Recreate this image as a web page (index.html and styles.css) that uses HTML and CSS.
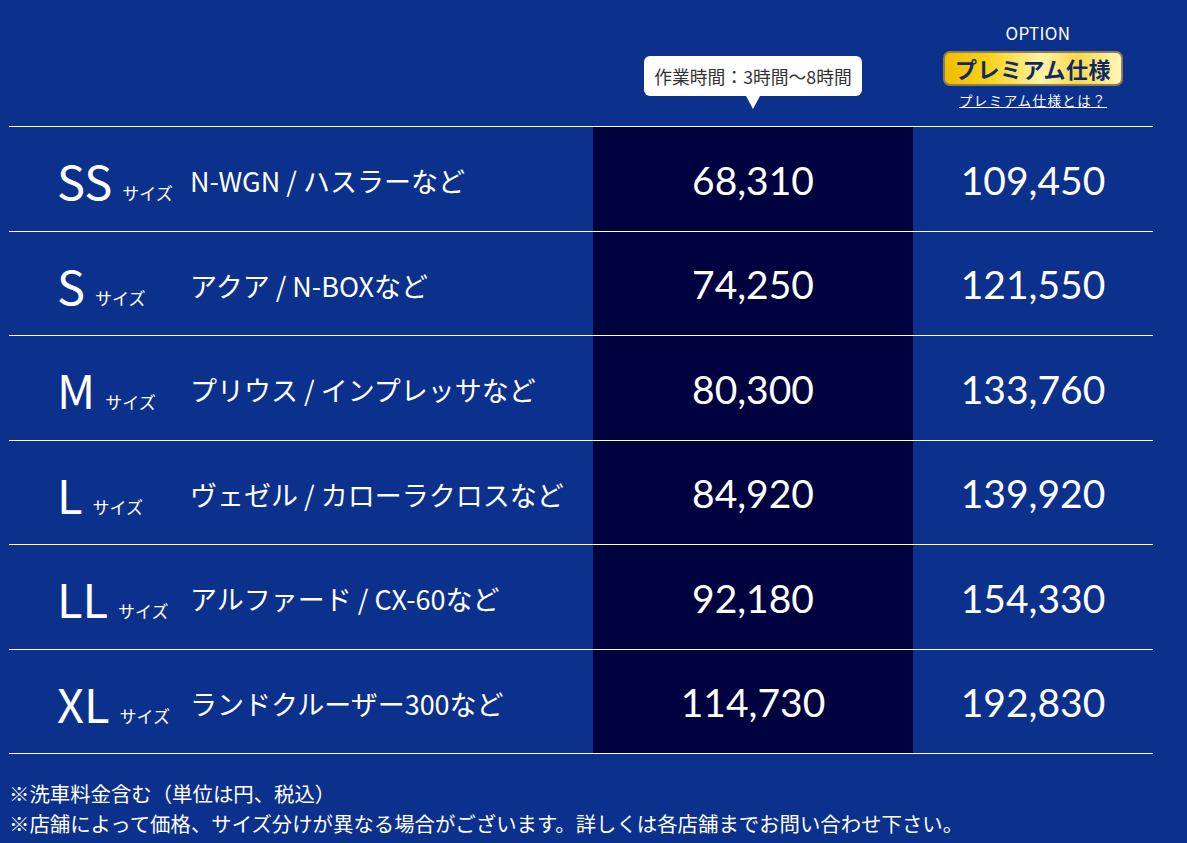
FILE: index.html
```html
<!DOCTYPE html>
<html lang="ja">
<head>
<meta charset="utf-8">
<title>料金表</title>
<link rel="stylesheet" href="styles.css">
</head>
<body>
<div class="page">
  <div class="table">
    <div class="head">
      <div class="hcell"></div>
      <div class="hcell hcell-mid">
        <div class="tip">作業時間：3時間〜8時間</div>
      </div>
      <div class="hcell hcell-opt">
        <div class="opt-label">OPTION</div>
        <div class="badge">プレミアム仕様</div>
        <a class="opt-link" href="#">プレミアム仕様とは？</a>
      </div>
    </div>

    <div class="row">
      <div class="c-name"><span class="size"><span class="size-big">SS</span><span class="size-small">サイズ</span></span><span class="car">N-WGN / ハスラーなど</span></div>
      <div class="c-std">68,310</div>
      <div class="c-opt">109,450</div>
    </div>
    <div class="row">
      <div class="c-name"><span class="size"><span class="size-big">S</span><span class="size-small">サイズ</span></span><span class="car">アクア / N-BOXなど</span></div>
      <div class="c-std">74,250</div>
      <div class="c-opt">121,550</div>
    </div>
    <div class="row">
      <div class="c-name"><span class="size"><span class="size-big">M</span><span class="size-small">サイズ</span></span><span class="car">プリウス / インプレッサなど</span></div>
      <div class="c-std">80,300</div>
      <div class="c-opt">133,760</div>
    </div>
    <div class="row">
      <div class="c-name"><span class="size"><span class="size-big">L</span><span class="size-small">サイズ</span></span><span class="car">ヴェゼル / カローラクロスなど</span></div>
      <div class="c-std">84,920</div>
      <div class="c-opt">139,920</div>
    </div>
    <div class="row">
      <div class="c-name"><span class="size"><span class="size-big">LL</span><span class="size-small">サイズ</span></span><span class="car">アルファード / CX-60など</span></div>
      <div class="c-std">92,180</div>
      <div class="c-opt">154,330</div>
    </div>
    <div class="row row-last">
      <div class="c-name"><span class="size"><span class="size-big">XL</span><span class="size-small">サイズ</span></span><span class="car">ランドクルーザー300など</span></div>
      <div class="c-std">114,730</div>
      <div class="c-opt">192,830</div>
    </div>
  </div>

  <div class="notes">
    <p>※洗車料金含む（単位は円、税込）</p>
    <p>※店舗によって価格、サイズ分けが異なる場合がございます。詳しくは各店舗までお問い合わせ下さい。</p>
  </div>
</div>
</body>
</html>
```

FILE: styles.css
```css
* { box-sizing: border-box; }

html, body {
  margin: 0;
  padding: 0;
  background: #0b318c;
  height: 100%;
}

body {
  font-family: "Noto Sans CJK JP", "Noto Sans", sans-serif;
  color: #ffffff;
  overflow: hidden;
}

.page {
  padding-left: 9px;
  width: 1153px;
}

.table {
  display: flex;
  flex-direction: column;
}

.head,
.row {
  display: grid;
  grid-template-columns: 584px 320px 240px;
}

.head {
  height: 126px;
}

.hcell-mid {
  display: flex;
  justify-content: center;
  align-items: flex-start;
  padding-top: 56px;
}

.tip {
  position: relative;
  background: #ffffff;
  color: #333333;
  font-size: 17.8px;
  line-height: 40px;
  height: 40px;
  padding: 0 10px;
  border-radius: 6px;
  white-space: nowrap;
}

.tip::after {
  content: "";
  position: absolute;
  left: 50%;
  top: 40px;
  margin-left: -7px;
  border-left: 7px solid transparent;
  border-right: 7px solid transparent;
  border-top: 13px solid #ffffff;
}

.hcell-opt {
  display: flex;
  flex-direction: column;
  align-items: center;
  padding-top: 20px;
}

.opt-label {
  font-size: 17px;
  line-height: 25px;
  padding-left: 10px;
  letter-spacing: 0.3px;
}

.badge {
  margin-top: 6px;
  width: 180px;
  height: 35px;
  border: 2px solid #8c7f55;
  border-radius: 7px;
  background: linear-gradient(90deg, #f0bd00 0%, #f9d21c 25%, #fff3a6 55%, #f8d84a 75%, #fff6b8 100%);
  color: #0d2a66;
  font-weight: 700;
  font-size: 22px;
  line-height: 30px;
  text-align: center;
  letter-spacing: 0.5px;
}

.opt-link {
  margin-top: 5px;
  color: #ffffff;
  font-size: 13.5px;
  line-height: 18px;
  text-decoration: underline;
  letter-spacing: 1.4px;
}

.row {
  height: 104.5px;
  border-top: 1px solid #ffffff;
}

.row-last {
  border-bottom: 1px solid #ffffff;
  height: 105.5px;
}

.c-name {
  display: flex;
  align-items: center;
  padding-top: 4px;
  padding-left: 48px;
}

.size {
  width: 133px;
  flex: none;
  display: flex;
  align-items: baseline;
  white-space: nowrap;
}

.size-big {
  font-size: 47px;
  line-height: 1;
}

.size-small {
  font-size: 17px;
  margin-left: 10px;
}

.car {
  font-size: 27px;
  white-space: nowrap;
}

.c-std,
.c-opt {
  display: flex;
  align-items: center;
  justify-content: center;
  padding-top: 2px;
  font-family: "Lato", sans-serif;
  font-size: 39px;
}

.c-std {
  background: #00023f;
}

.notes {
  padding-top: 24px;
}

.notes p {
  margin: 0;
  font-size: 20.4px;
  line-height: 30px;
}
```
